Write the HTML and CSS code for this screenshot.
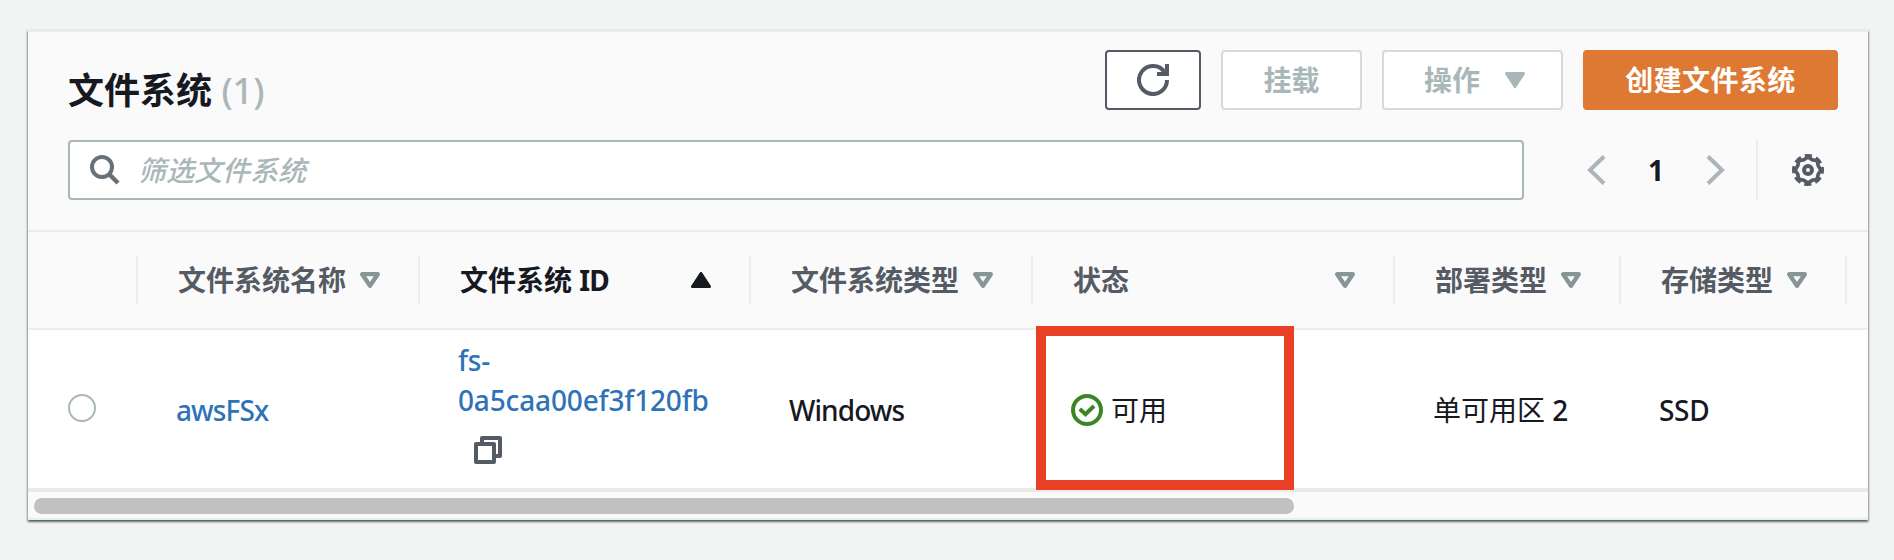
FILE: index.html
```html
<!DOCTYPE html>
<html lang="zh-CN">
<head>
<meta charset="utf-8">
<title>文件系统</title>
<link rel="stylesheet" href="styles.css">
</head>
<body>
<svg width="0" height="0" class="defs">
  <symbol id="sort" viewBox="0 0 20 16"><path d="M2.200 2.200h15.600L10 13.800z" fill="none" stroke="currentColor" stroke-width="4.300" stroke-linejoin="round"/></symbol>
</svg>
<main class="panel">
  <header class="head">
    <div class="top">
      <h1 class="title">文件系统 <span class="count">(1)</span></h1>
      <div class="actions">
        <button class="btn refresh" aria-label="refresh"><svg width="32" height="32" viewBox="0 0 32 32"><path d="M27.500 8A14 14 0 1 0 30 16" fill="none" stroke="currentColor" stroke-width="4"/><path d="M30 0v10H20" fill="none" stroke="currentColor" stroke-width="4"/></svg></button>
        <button class="btn mount disabled">挂载</button>
        <button class="btn ops disabled"><span>操作</span><svg width="20" height="16" viewBox="0 0 20 16"><path d="M1.5 1.5h17L10 14.5z" fill="currentColor" stroke="currentColor" stroke-width="3" stroke-linejoin="round"/></svg></button>
        <button class="btn primary">创建文件系统</button>
      </div>
    </div>
    <div class="tools">
      <div class="search">
        <svg width="30" height="30" viewBox="0 0 30 30"><circle cx="12" cy="12" r="10" fill="none" stroke="currentColor" stroke-width="4"/><path d="M19 19l9 9" stroke="currentColor" stroke-width="4.4"/></svg>
        <span class="placeholder">筛选文件系统</span>
      </div>
      <div class="pager">
        <svg width="19" height="32" viewBox="0 0 19 32"><path d="M17 2.5L3 16l14 13.500" fill="none" stroke="currentColor" stroke-width="4"/></svg>
        <span class="page">1</span>
        <svg width="19" height="32" viewBox="0 0 19 32"><path d="M2 2.5L16 16 2 29.500" fill="none" stroke="currentColor" stroke-width="4"/></svg>
      </div>
      <div class="settings">
        <svg width="32" height="32" viewBox="0 0 32 32" fill="none" stroke="currentColor" stroke-width="4"><path stroke-width="3.600" d="M29 16l-2.800 4.200-1 5-5 1L16 29l-4.200-2.800-5-1-1-5L3 16l2.800-4.200 1-5 5-1L16 3l4.200 2.800 5 1 1 5z"/><circle cx="16" cy="16" r="14" stroke-dasharray="7 3.996" stroke-dashoffset="3.500"/><circle cx="16" cy="16" r="4"/></svg>
      </div>
    </div>
  </header>
  <section class="row thead">
    <div class="th"></div>
    <div class="th"><span>文件系统名称</span><svg class="sort"><use href="#sort"/></svg></div>
    <div class="th sorted"><span>文件系统 <span class="tight">ID</span></span><svg class="sort" viewBox="0 0 20 16"><path d="M1.500 14.500h17L10 1.500z" fill="currentColor" stroke="currentColor" stroke-width="3" stroke-linejoin="round"/></svg></div>
    <div class="th"><span>文件系统类型</span><svg class="sort"><use href="#sort"/></svg></div>
    <div class="th"><span>状态</span><svg class="sort"><use href="#sort"/></svg></div>
    <div class="th"><span>部署类型</span><svg class="sort"><use href="#sort"/></svg></div>
    <div class="th"><span>存储类型</span><svg class="sort"><use href="#sort"/></svg></div>
  </section>
  <section class="row tbody">
    <div class="td pick"><span class="radio"></span></div>
    <div class="td"><a class="link latin tight">awsFSx</a></div>
    <div class="td id"><a class="link latin">fs-<br>0a5caa00ef3f120fb</a><svg class="copy" width="28" height="28" viewBox="0 0 28 28" fill="none" stroke="currentColor" stroke-width="4" stroke-linejoin="round"><path d="M2 8h18v18H2zM8 8V2h18v18h-6"/></svg></div>
    <div class="td"><span class="latin tight">Windows</span></div>
    <div class="td status"><svg width="32" height="32" viewBox="0 0 32 32" fill="none" stroke="currentColor" stroke-width="4"><circle cx="16" cy="16" r="14"/><path d="M8.800 15l5.700 5.200L23 12"/></svg><span>可用</span><i class="highlight"></i></div>
    <div class="td"><span>单可用区 <span class="latin">2</span></span></div>
    <div class="td"><span class="latin">SSD</span></div>
  </section>
  <div class="scroll"><div class="thumb"></div></div>
</main>
</body>
</html>
```

FILE: styles.css
```css
* { box-sizing: border-box; }
body {
  margin: 0;
  height: 560px;
  padding: 30px 26px 0 28px;
  overflow: hidden;
  background: #f2f3f3;
  color: #16191f;
  font: 28px/40px "Noto Sans", "Noto Sans CJK SC", sans-serif;
}
svg { display: block; flex: none; }
.defs { position: absolute; }
.panel {
  width: 1840px;
  height: 490px;
  display: flex;
  flex-direction: column;
  background: #fff;
  border-top: 2px solid #eaeded;
  box-shadow: 0 2px 2px 0 rgba(0, 28, 36, .5), 1px 1px 2px 0 rgba(0, 28, 36, .25), -1px 1px 2px 0 rgba(0, 28, 36, .25);
}
.head {
  height: 200px;
  padding: 18px 30px 0 40px;
  background: #fafafa;
  border-bottom: 2px solid #eaeded;
}
.top { display: flex; justify-content: space-between; height: 90px; }
.title { margin: 19px 0 0; font-size: 36px; line-height: 44px; font-weight: 700; white-space: nowrap; }
.count { color: #aab7b8; font-weight: 500; }
.actions { display: flex; gap: 20px; height: 60px; }
.btn {
  display: flex;
  align-items: center;
  justify-content: center;
  height: 60px;
  padding: 0;
  border: 2px solid #d5dbdb;
  border-radius: 4px;
  background: #fff;
  color: #545b64;
  font: 700 28px/40px "Noto Sans", "Noto Sans CJK SC", sans-serif;
}
.refresh { width: 96px; border-color: #545b64; }
.mount { width: 141px; }
.ops { width: 181px; gap: 25px; padding-left: 4px; }
.disabled { color: #aab7b8; }
.primary { width: 255px; background: #dd7932; border-color: #dd7932; color: #fff; letter-spacing: .4px; }
.tools { display: flex; height: 60px; }
.search {
  width: 1456px;
  display: flex;
  align-items: center;
  gap: 18px;
  padding-left: 20px;
  border: 2px solid #aab7b8;
  border-radius: 4px;
  background: #fff;
  color: #687078;
}
.placeholder { color: #aab7b8; font-style: italic; font-weight: 500; }
.pager { width: 232px; display: flex; align-items: center; justify-content: space-between; padding: 0 31px 0 63px; color: #aab7b8; }
.page { color: #16191f; font-weight: 700; }
.settings { flex: 1; display: flex; align-items: center; padding-left: 34px; border-left: 2px solid #eaeded; color: #545b64; }
.row { display: grid; grid-template-columns: 110px 282px 331px 282px 362px 226px 226px; }
.thead { height: 98px; padding-top: 24px; background: #fafafa; border-bottom: 2px solid #eaeded; }
.th {
  height: 48px;
  display: flex;
  align-items: center;
  justify-content: space-between;
  padding: 0 38px 0 40px;
  border-right: 2px solid #eaeded;
  color: #545b64;
  font-weight: 700;
  white-space: nowrap;
}
.sort { width: 20px; height: 16px; color: #879596; }
.sorted, .sorted .sort { color: #16191f; }
.tbody { height: 162px; border-bottom: 4px solid #e9ebeb; }
.td { display: flex; align-items: center; padding: 1px 0 0 38px; white-space: nowrap; }
.pick { padding: 0 0 2px 40px; }
.radio { width: 28px; height: 28px; border: 2px solid #aab7b8; border-radius: 50%; }
.link { color: #2e73b8; }
.latin { font-weight: 500; letter-spacing: -.3px; }
.tight { letter-spacing: -.9px; }
.id { flex-direction: column; align-items: flex-start; padding-top: 10px; }
.id .link { letter-spacing: -.15px; }
.copy { margin: 16px 0 0 16px; color: #545b64; }
.status { position: relative; gap: 8px; }
.status svg { color: #3b8624; }
.highlight { position: absolute; left: 3px; top: -4px; width: 258px; height: 164px; border: 10px solid #e94025; }
.scroll { flex: 1; padding: 6px 6px 0; background: #fafafa; border-bottom: 2px solid #eaeded; }
.thumb { width: 1260px; height: 16px; border-radius: 8px; background: #c1c1c1; }
```
